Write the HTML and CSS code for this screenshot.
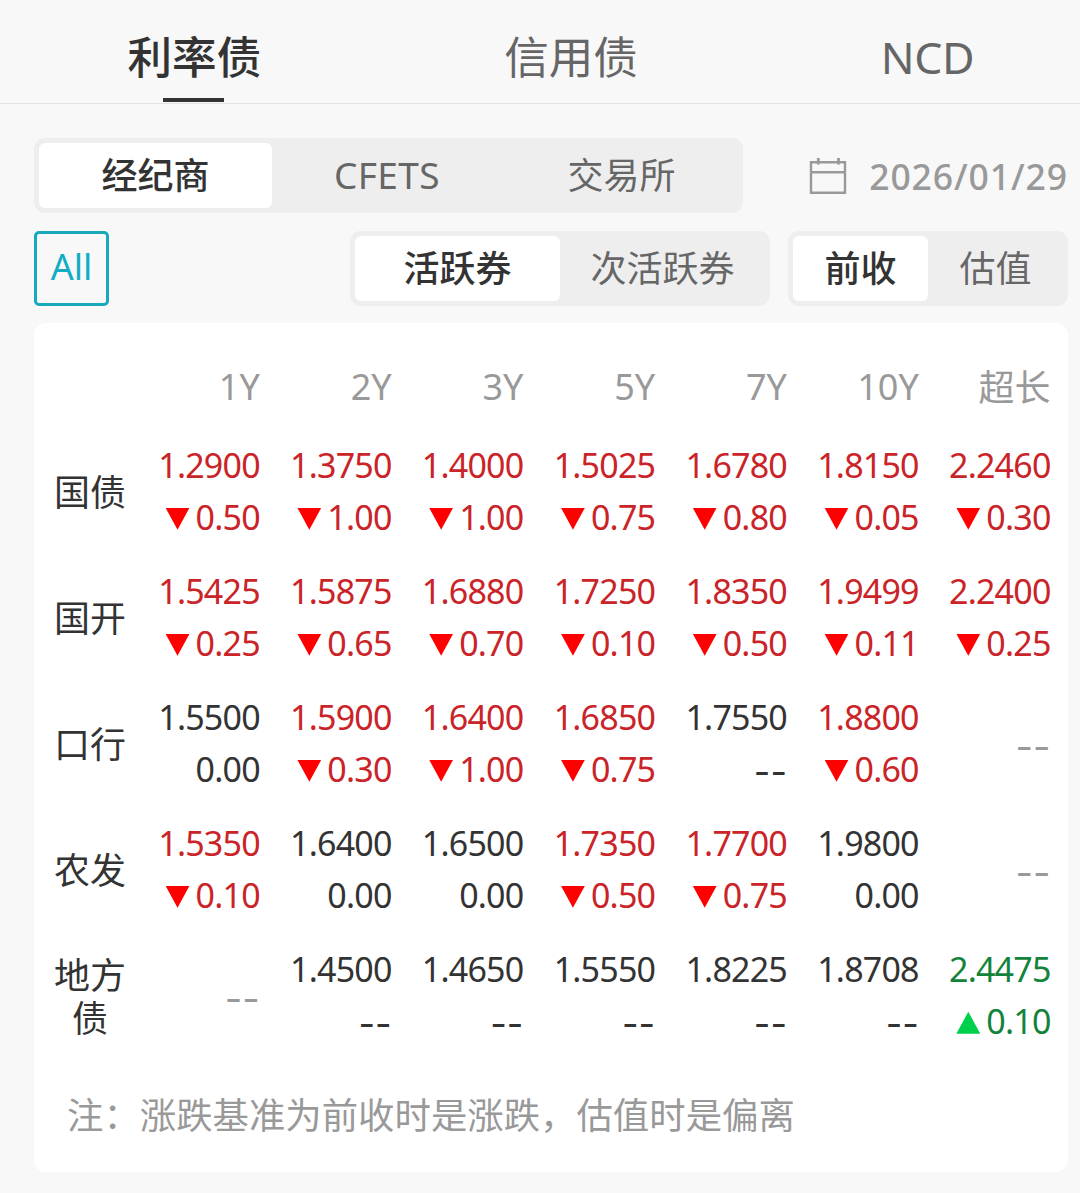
FILE: index.html
```html
<!DOCTYPE html>
<html lang="zh-CN">
<head>
<meta charset="utf-8">
<title>利率债</title>
<link rel="stylesheet" href="styles.css">
</head>
<body>
<nav class="tabs">
  <a class="tab tab-rate active">利率债</a>
  <a class="tab tab-credit">信用债</a>
  <a class="tab tab-ncd">NCD</a>
</nav>
<main class="content">
  <div class="toolbar">
    <div class="segment source">
      <button class="option selected">经纪商</button>
      <button class="option latin">CFETS</button>
      <button class="option">交易所</button>
    </div>
    <div class="date">
      <svg class="calendar" width="38" height="38" viewBox="0 0 38 38" fill="none" stroke="#999" stroke-width="2.4"><path d="M2 5.2h34v30.6H2zM2 15.2h34"/><path d="M9.3 1v6.5M29.5 1v6.5" stroke-width="2.8"/></svg>
      <span class="date-text">2026/01/29</span>
    </div>
  </div>
  <div class="toolbar filters">
    <button class="all">All</button>
    <div class="segment activity">
      <button class="option selected">活跃券</button>
      <button class="option">次活跃券</button>
    </div>
    <div class="segment basis">
      <button class="option selected">前收</button>
      <button class="option">估值</button>
    </div>
  </div>
  <section class="card">
    <div class="row head"><span></span><span>1Y</span><span>2Y</span><span>3Y</span><span>5Y</span><span>7Y</span><span>10Y</span><span class="cjk">超长</span></div>
    <div class="row">
      <div class="label">国债</div>
      <div class="cell down"><span>1.2900</span><span class="change">0.50</span></div>
      <div class="cell down"><span>1.3750</span><span class="change">1.00</span></div>
      <div class="cell down"><span>1.4000</span><span class="change">1.00</span></div>
      <div class="cell down"><span>1.5025</span><span class="change">0.75</span></div>
      <div class="cell down"><span>1.6780</span><span class="change">0.80</span></div>
      <div class="cell down"><span>1.8150</span><span class="change">0.05</span></div>
      <div class="cell down"><span>2.2460</span><span class="change">0.30</span></div>
    </div>
    <div class="row">
      <div class="label">国开</div>
      <div class="cell down"><span>1.5425</span><span class="change">0.25</span></div>
      <div class="cell down"><span>1.5875</span><span class="change">0.65</span></div>
      <div class="cell down"><span>1.6880</span><span class="change">0.70</span></div>
      <div class="cell down"><span>1.7250</span><span class="change">0.10</span></div>
      <div class="cell down"><span>1.8350</span><span class="change">0.50</span></div>
      <div class="cell down"><span>1.9499</span><span class="change">0.11</span></div>
      <div class="cell down"><span>2.2400</span><span class="change">0.25</span></div>
    </div>
    <div class="row">
      <div class="label">口行</div>
      <div class="cell"><span>1.5500</span><span>0.00</span></div>
      <div class="cell down"><span>1.5900</span><span class="change">0.30</span></div>
      <div class="cell down"><span>1.6400</span><span class="change">1.00</span></div>
      <div class="cell down"><span>1.6850</span><span class="change">0.75</span></div>
      <div class="cell"><span>1.7550</span><span class="dash">--</span></div>
      <div class="cell down"><span>1.8800</span><span class="change">0.60</span></div>
      <div class="cell none"><span class="dash">--</span></div>
    </div>
    <div class="row">
      <div class="label">农发</div>
      <div class="cell down"><span>1.5350</span><span class="change">0.10</span></div>
      <div class="cell"><span>1.6400</span><span>0.00</span></div>
      <div class="cell"><span>1.6500</span><span>0.00</span></div>
      <div class="cell down"><span>1.7350</span><span class="change">0.50</span></div>
      <div class="cell down"><span>1.7700</span><span class="change">0.75</span></div>
      <div class="cell"><span>1.9800</span><span>0.00</span></div>
      <div class="cell none"><span class="dash">--</span></div>
    </div>
    <div class="row">
      <div class="label">地方债</div>
      <div class="cell none"><span class="dash">--</span></div>
      <div class="cell"><span>1.4500</span><span class="dash">--</span></div>
      <div class="cell"><span>1.4650</span><span class="dash">--</span></div>
      <div class="cell"><span>1.5550</span><span class="dash">--</span></div>
      <div class="cell"><span>1.8225</span><span class="dash">--</span></div>
      <div class="cell"><span>1.8708</span><span class="dash">--</span></div>
      <div class="cell up"><span>2.4475</span><span class="change">0.10</span></div>
    </div>
    <p class="note">注：涨跌基准为前收时是涨跌，估值时是偏离</p>
  </section>
</main>
</body>
</html>
```
FILE: styles.css
```css
* { box-sizing: border-box; }
body {
  margin: 0;
  height: 1193px;
  overflow: hidden;
  background: #f8f8f8;
  color: #333;
  font-family: "Noto Sans", "Noto Sans CJK SC", sans-serif;
  font-size: 36px;
}
button {
  border: 0;
  padding: 0;
  background: none;
  color: inherit;
  font: inherit;
  line-height: 1;
}
.tabs {
  display: flex;
  height: 104px;
  padding: 0 106px 0 127.5px;
  justify-content: space-between;
  border-bottom: 1px solid #e2e2e2;
  font-size: 44.6px;
  color: #666;
}
.tab {
  display: flex;
  flex-direction: column;
  align-items: center;
  height: 103px;
  line-height: 110px;
}
.tab-rate, .tab-credit { font-family: "Noto Sans CJK SC", sans-serif; }
.tab-ncd { font-size: 44.6px; letter-spacing: -.5px; line-height: 114px; }
.tab.active { color: #333; font-weight: 500; }
.tab.active::after {
  content: "";
  width: 61px;
  height: 4px;
  margin: -12px 2px 0 0;
  background: #333;
}
.content { padding: 34px 12px 0 34px; }
.toolbar { display: flex; height: 75px; justify-content: space-between; }
.filters { margin: 18px 0 17px; }
.segment {
  display: grid;
  padding: 5px;
  border-radius: 11px;
  background: #eee;
  color: #666;
}
.source { width: 709px; grid-template-columns: repeat(3, 1fr); }
.activity { width: 420px; margin-left: auto; grid-template-columns: 205px 1fr; }
.basis { width: 280px; margin-left: 18px; grid-template-columns: 135px 1fr; }
.option { border-radius: 6px; }
.latin { padding: 0 3px 2px 0; font-size: 37px; letter-spacing: .4px; }
.selected { background: #fff; color: #333; font-weight: 500; }
.date { display: flex; align-items: center; color: #999; }
.date-text { margin: 0 0 0 22px; font-size: 35.5px; font-weight: 500; letter-spacing: .9px; }
.all {
  width: 75px;
  height: 75px;
  padding-bottom: 3px;
  border: 3px solid #18a9bd;
  border-radius: 5px;
  color: #12adc5;
}
.card {
  height: 849px;
  padding: 23px 17px 0 18px;
  border-radius: 12px;
  background: #fff;
}
.row {
  display: grid;
  grid-template-columns: 76px repeat(7, 131.8px);
  height: 126px;
  align-items: center;
}
.head { height: 80px; margin-bottom: 2px; color: #999; text-align: right; }
.cjk, .label, .note { font-family: "Noto Sans CJK SC", sans-serif; }
.cjk { padding-bottom: 2px; }
.label { text-align: center; line-height: 43px; padding-bottom: 1px; }
.cell {
  display: flex;
  flex-direction: column;
  align-items: flex-end;
  font-size: 34px;
  line-height: 52.4px;
  letter-spacing: -.8px;
}
.change { display: flex; align-items: center; }
.change::before {
  content: "";
  width: 24px;
  height: 22px;
  margin: 3px 6px 0 0;
  background: #f00;
  clip-path: polygon(0 0, 100% 0, 50% 100%);
}
.down { color: #ca2328; }
.up { color: #13833b; }
.up .change::before { background: #00d04c; clip-path: polygon(50% 0, 100% 100%, 0 100%); }
.dash {
  padding-top: 6px;
  font-family: Inter, sans-serif;
  font-size: 36px;
  line-height: 46.4px;
  letter-spacing: 0;
}
.none { color: #999; }
.none .dash { font-size: 38px; }
.note { margin: 29px 0 0 15px; font-size: 36.4px; line-height: 52px; white-space: nowrap; color: #999; }
```
